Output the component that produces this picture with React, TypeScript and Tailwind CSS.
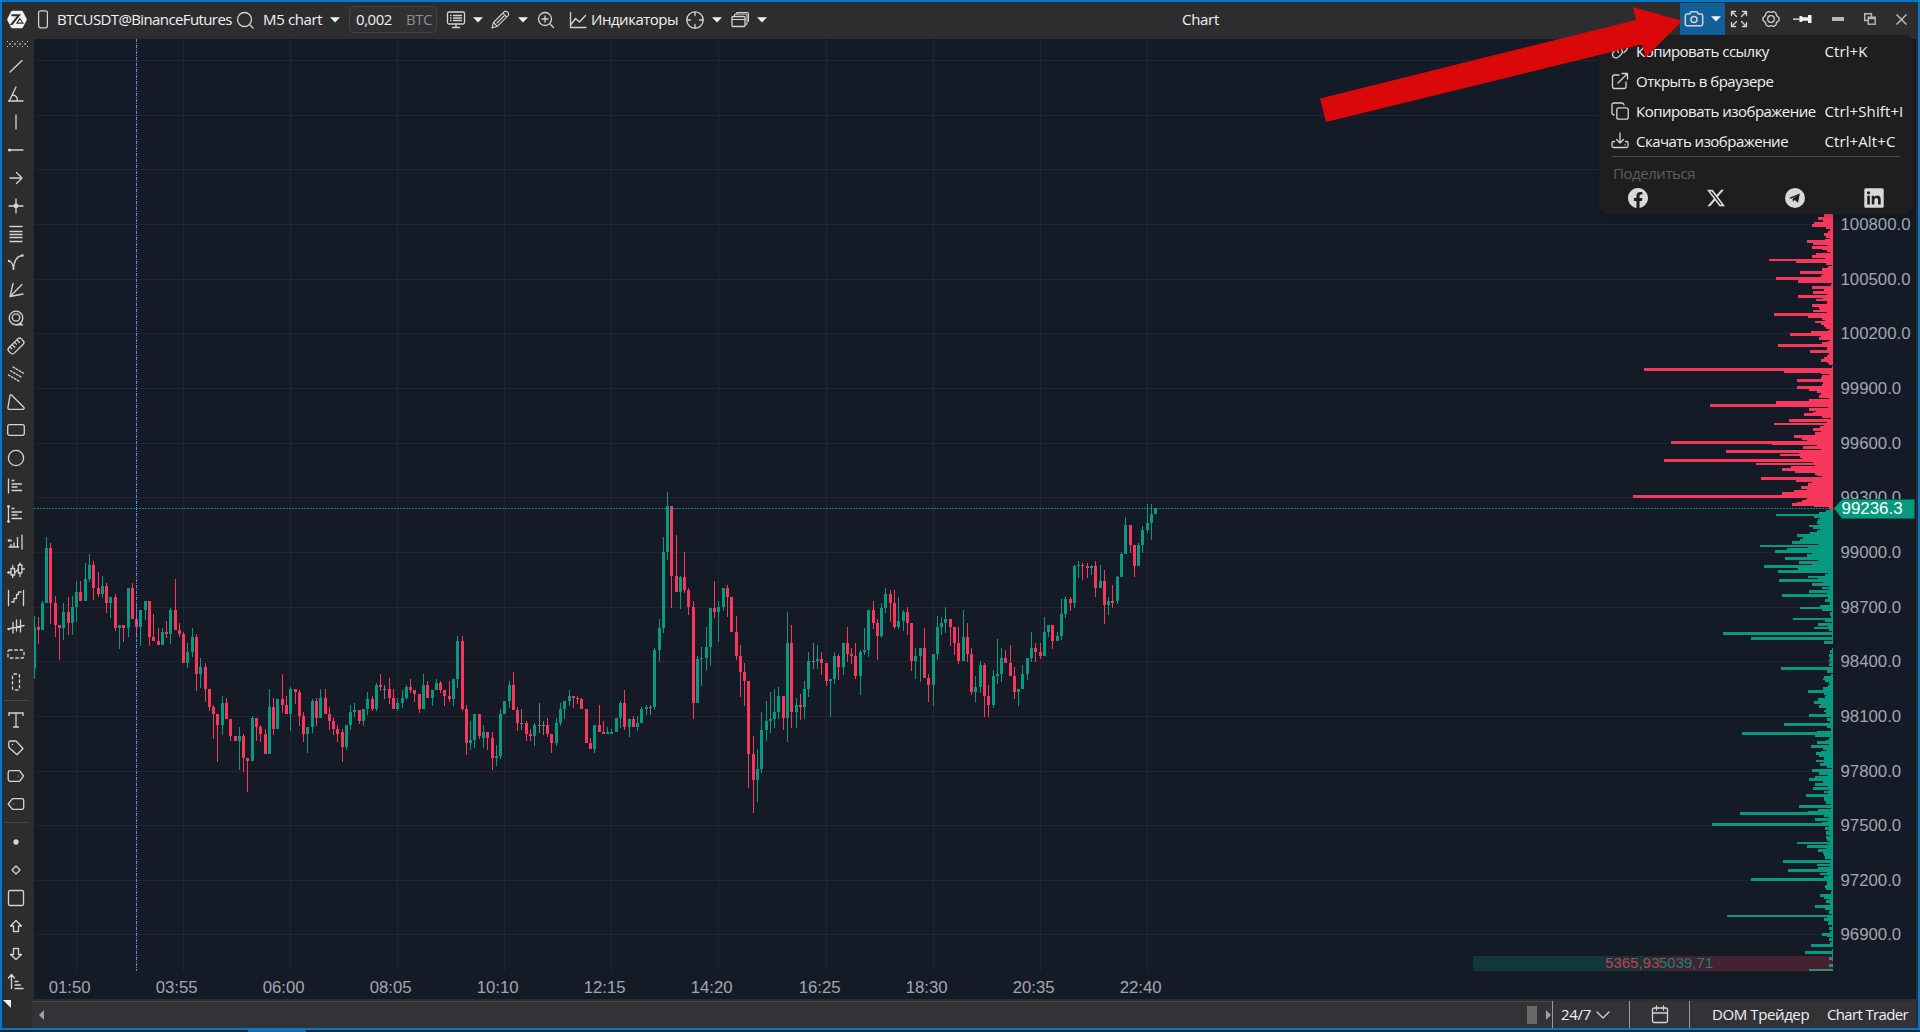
import type { ReactNode } from "react";

const GREEN = "#089981";
const RED = "#f7385c";

/* Candles: x, high, body top, body bottom, low, kind (g up, r down, w flat).
   Values are thirds of a pixel from the block's origin. */
const BLOCKS: { ox: number; rows: string }[] = [
  {
    ox: 30,
    rows: `13 408 441 564 597 g;25 411 441 450 492 r;37 363 369 450 450 g;49 171 204 369 369 g;61 189 204 369 432 r;76 348 369 435 471 r;88 435 435 444 540 r;100 369 396 444 480 g;115 351 396 429 465 r;127 348 381 429 465 g;139 303 336 381 426 g;151 303 336 363 363 r;166 249 297 363 363 g;178 222 255 297 306 g;190 243 255 324 360 r;205 276 324 342 351 r;217 288 318 342 354 g;229 309 318 369 399 r;241 351 351 369 414 g;256 342 351 444 453 r;268 435 435 444 507 g;280 435 435 444 486 r;295 324 324 444 471 g;307 309 324 417 417 r;319 369 417 441 471 r;331 390 390 441 498 g;346 363 363 390 420 g;358 363 363 471 498 r;370 402 471 483 483 r;385 444 483 495 495 r;397 444 456 495 495 g;409 423 456 462 474 r;421 384 390 462 492 g;436 297 390 450 450 r;448 429 450 462 471 r;460 456 462 549 549 r;472 489 516 549 564 g;487 444 471 516 531 g;499 462 471 582 633 r;511 534 561 582 624 g;526 549 561 627 666 r;538 627 627 681 693 r;550 675 681 702 777 r;562 702 702 735 846 r;577 648 669 735 765 g;589 654 669 717 717 r;601 717 717 768 783 r;616 768 768 783 783 r;628 741 768 783 870 g;640 762 768 834 876 r;652 834 834 843 936 r;667 708 714 843 843 g;679 714 714 741 783 r;691 735 741 762 786 r;706 747 762 822 822 r;718 627 681 822 822 g;730 654 681 747 765 r;742 657 657 747 747 g;757 582 657 675 699 r;769 648 675 702 702 r;781 621 627 702 753 g;796 627 627 636 672 r;808 630 636 708 738 r;820 696 708 762 786 r;832 741 741 762 819 g;847 657 663 741 759 g;859 654 663 714 738 r;871 627 654 714 714 g;886 627 654 702 702 r;898 681 702 723 750 r;910 714 723 747 765 r;922 735 747 762 786 r;937 747 756 801 846 r;949 735 735 801 810 g;961 675 696 735 750 g;973 669 690 696 711 g;988 690 690 723 732 r;1000 687 687 723 738 g;1012 636 657 687 705 g;1027 648 657 687 693 r;1039 609 615 687 693 g;1051 582 615 621 633 r;1063 615 627 630 657 w;1078 594 627 654 672 r;1090 627 654 687 687 r;1102 654 669 687 693 g;1117 630 654 669 684 g;1129 615 621 654 660 g;1141 597 621 630 639 r;1153 630 630 642 666 r;1168 642 642 687 699 r;1180 582 615 687 687 g`,
  },
  {
    ox: 420,
    rows: `22 603 615 654 654 r;37 630 630 654 678 g;49 597 609 630 630 g;61 603 609 630 639 r;73 630 630 648 678 r;88 603 648 657 666 r;100 597 597 657 678 g;112 468 483 597 624 g;127 468 483 687 693 r;139 675 687 789 825 r;151 723 780 789 810 g;163 702 702 780 804 g;178 702 702 768 777 r;190 735 756 774 804 g;202 756 756 774 810 r;217 756 774 834 870 r;229 795 828 834 858 g;241 687 702 828 837 g;253 663 663 702 702 g;268 603 615 663 684 g;280 576 615 690 690 r;292 681 690 729 753 r;304 687 729 732 750 w;319 723 729 762 783 r;331 747 762 768 783 r;343 729 735 768 798 g;358 669 735 738 759 w;370 723 735 738 765 w;382 714 735 762 771 r;394 762 762 789 819 r;409 714 729 789 798 g;421 669 687 729 738 g;433 663 663 687 717 g;448 630 648 663 678 g;460 648 648 654 684 r;472 648 654 657 672 r;484 654 657 687 687 r;499 687 687 789 789 r;511 774 789 807 807 r;523 735 735 807 819 g;538 675 735 756 756 r;550 723 756 762 762 r;562 741 756 762 762 g;574 747 756 762 762 g;589 714 714 756 756 g;601 663 669 714 744 g;613 630 669 741 750 r;628 717 717 741 771 g;640 708 717 741 741 r;652 708 729 741 753 g;664 681 687 729 729 g;679 675 681 687 705 g;691 675 681 684 705 w;703 504 510 681 690 g;718 417 444 510 546 g;730 171 216 444 459 g;742 36 78 216 240 g;754 78 78 288 384 r;769 165 288 336 336 r;781 288 291 336 387 g;793 216 291 330 339 r;805 324 330 381 405 r;820 363 381 669 717 r;832 528 537 669 669 g;844 501 534 537 618 g;859 441 501 534 573 g;871 384 384 501 558 g;883 303 384 396 414 r;895 363 381 396 486 g;910 324 324 381 393 g;922 315 324 351 411 r;934 351 351 456 456 r;949 408 456 528 540 r;961 495 528 576 651 r;973 549 576 603 678 r;985 603 603 822 924 r;1000 768 822 900 999 r;1012 807 867 900 966 g;1024 696 750 867 879 g;1039 663 723 750 783 g;1051 636 717 723 759 g;1063 627 696 717 744 g;1075 621 648 696 717 g;1090 648 648 714 750 r;1102 396 489 714 786 g;1114 435 489 696 744 r;1129 654 675 696 744 g;1141 642 675 681 720 r`,
  },
  {
    ox: 800,
    rows: `13 603 627 681 717 g;25 516 543 627 651 g;40 489 543 546 567 w;52 495 537 543 567 g;64 516 537 549 585 r;79 549 549 603 618 r;91 597 597 603 711 g;103 516 528 597 612 g;115 522 528 561 600 r;130 489 489 561 585 g;142 441 489 522 546 r;154 504 522 528 552 r;166 489 528 588 597 r;181 510 516 588 645 g;193 444 510 516 525 g;205 390 390 510 531 g;220 363 390 429 447 r;232 417 429 468 540 r;244 369 384 468 474 g;256 324 342 384 399 g;271 330 342 369 426 r;283 330 369 441 447 r;295 351 423 441 447 g;310 390 396 423 453 g;322 381 396 429 465 r;334 429 429 543 573 r;346 504 528 543 597 g;361 504 504 528 606 g;373 444 504 594 594 r;385 582 594 615 666 r;400 522 522 615 678 g;412 408 441 522 540 g;424 411 429 441 465 g;436 381 417 429 459 g;451 417 417 441 498 r;463 441 441 489 525 r;475 441 489 543 552 r;490 390 471 543 543 g;502 429 471 522 546 r;514 504 522 636 645 r;526 588 621 636 666 g;541 543 555 621 639 g;553 549 555 648 711 r;565 615 648 675 711 r;580 570 588 675 684 g;592 477 582 588 612 g;604 504 534 582 606 g;616 510 534 549 549 r;631 495 549 588 588 r;643 561 588 636 657 r;655 627 627 636 678 g;667 555 582 627 627 g;682 534 534 582 600 g;694 456 504 534 546 g;706 489 504 516 546 r;721 489 516 528 537 r;733 411 456 528 528 g;745 435 435 456 471 g;757 435 435 483 507 r;772 456 468 483 483 g;784 357 402 468 480 g;796 348 357 402 414 g;811 351 357 369 393 r;823 255 258 369 384 g;835 243 255 258 294 g;847 249 255 258 300 r;862 249 258 264 294 r;874 255 258 264 285 g;886 243 258 324 351 r;901 255 303 324 324 g;913 270 303 375 432 r;925 351 363 375 405 g;937 315 363 369 384 r;952 288 291 363 372 g;964 216 222 291 291 g;976 111 135 222 222 g;991 135 135 195 219 r;1003 195 195 258 291 r;1015 189 195 258 258 g;1027 138 150 195 219 g;1042 72 129 150 159 g;1054 72 102 129 180 g;1066 84 84 102 102 g`,
  },
];

/* Order-book depth outline: "y:left" steps, thirds of a pixel. */
const ASKS =
  "42:792 51:774 60:789 66:762 72:756 81:798 87:810 93:804 99:792 108:798 114:810 117:795 120:741 129:759 135:801 138:756 147:786 150:801 156:810 159:768 165:756 174:795 177:627 183:708 189:798 195:816 198:804 204:786 213:720 222:789 225:783 231:648 240:714 249:816 252:813 258:756 267:792 273:759 282:801 285:714 294:789 297:768 303:801 312:756 321:777 327:780 330:759 336:801 339:642 348:744 354:786 360:795 363:765 369:783 375:792 381:798 387:810 390:804 393:753 399:690 408:783 411:777 420:810 423:804 426:786 432:654 441:801 450:750 459:807 465:801 471:792 477:783 486:801 489:807 495:819 498:816 504:252 513:672 519:783 522:807 525:786 531:783 537:711 546:789 552:786 558:711 567:747 573:771 579:783 585:777 594:807 597:747 603:648 612:450 621:804 624:747 633:768 636:759 639:732 648:786 654:813 657:687 666:801 669:642 675:792 678:780 684:759 693:783 696:765 705:702 714:726 720:741 723:333 732:636 735:771 738:729 747:783 750:498 759:717 762:660 768:720 774:726 777:312 786:759 789:588 795:765 798:693 804:666 813:705 819:765 825:771 828:786 831:603 840:708 846:756 849:744 858:723 867:741 870:702 876:666 885:219 894:741 897:738 900:726 906:711 909:696 918:762 921:807 927:810 930:819";
const BIDS_UPPER =
  "930:798 936:777 942:648 948:762 954:780 957:774 963:771 972:777 975:747 981:759 987:780 990:771 996:750 1002:711 1011:729 1017:720 1023:696 1032:774 1035:600 1041:744 1044:681 1050:645 1059:756 1062:741 1071:675 1080:774 1083:717 1092:756 1095:612 1104:714 1110:654 1119:804 1122:795 1128:744 1134:774 1137:657 1146:789 1149:756 1158:810 1161:786 1167:807 1170:747 1179:801 1182:666 1191:819";
const BIDS_LOWER =
  "21:804 27:795 36:810 45:780 51:720 57:786 63:816 66:810 78:813 84:699 90:795 96:816 99:774 108:804 111:762 117:807 123:816 126:489 135:816 141:573 150:816 153:792 162:819 174:816 180:810 189:816 192:807 201:810 207:807 216:813 219:807 228:816 231:663 240:801 249:819 252:813 258:792 264:789 270:795 276:807 282:810 285:804 291:789 300:744 309:792 315:798 318:795 324:774 333:762 342:783 345:777 354:798 360:792 366:798 372:747 381:813 384:801 393:810 399:672 408:801 414:813 423:771 426:546 435:765 441:810 444:807 450:798 453:771 462:807 465:753 474:789 480:801 483:783 486:768 495:777 501:792 510:768 516:792 519:780 528:801 534:816 537:756 546:777 555:804 558:765 564:747 573:789 579:765 588:804 591:759 600:807 603:792 609:804 612:738 621:792 633:798 642:813 645:717 654:813 657:774 663:744 666:540 675:792 681:807 684:765 693:804 696:786 699:456 708:807 711:795 720:807 723:798 735:810 738:798 747:801 753:810 756:711 762:804 765:741 774:798 777:774 786:789 792:792 798:795 807:813 810:669 819:810 822:771 828:810 831:774 837:684 846:801 849:780 855:804 858:792 864:573 873:801 885:795 894:798 900:816 903:813 912:780 921:792 927:807 930:798 939:810 945:765 954:795 960:810 963:807 972:816 975:501 981:801 984:792 993:807 996:804 1005:816 1011:807 1020:816 1023:810 1029:786 1038:801 1041:816 1044:807 1053:816 1056:810 1062:753 1071:819 1077:816 1083:735 1092:816 1101:807 1110:816 1113:819 1122:807 1131:819 1137:747 1143:819";

function depthPath(steps: string, oy: number) {
  const pts = steps.split(" ").map((s) => s.split(":").map(Number));
  let d = "";
  for (let i = 0; i < pts.length - 1; i++) {
    const y0 = oy + pts[i][0] / 3;
    const y1 = oy + pts[i + 1][0] / 3;
    const x = 1560 + pts[i][1] / 3;
    if (x < 1833) d += `M${x} ${y0}H1833V${y1}H${x}Z`;
  }
  return d;
}

const H_LINES = [60, 115, 169, 224, 279, 333, 388, 443, 497, 552, 607, 661, 716, 771, 825, 880, 934];
const V_LINES = [76, 183, 290, 397, 504, 611, 718, 826, 933, 1040, 1147];
const TIMES = ["01:50", "03:55", "06:00", "08:05", "10:10", "12:15", "14:20", "16:25", "18:30", "20:35", "22:40"];
const PRICES = ["100800.0", "100500.0", "100200.0", "99900.0", "99600.0", "99300.0", "99000.0", "98700.0", "98400.0", "98100.0", "97800.0", "97500.0", "97200.0", "96900.0"];

function Candles() {
  return (
    <g>
      {BLOCKS.flatMap(({ ox, rows }) =>
        rows.split(";").map((row) => {
          const p = row.split(" ");
          const x = ox + Math.floor(+p[0] / 3);
          const [h, t, b, l] = [1, 2, 3, 4].map((k) => 480 + +p[k] / 3);
          const kind = p[5];
          const c = kind === "g" ? GREEN : kind === "r" ? RED : "#7b7b80";
          return (
            <g key={`${ox}-${p[0]}`} fill={c}>
              <rect x={x} y={h} width={1} height={l - h} />
              <rect x={x - 1} y={t} width={3} height={b - t} />
            </g>
          );
        })
      )}
    </g>
  );
}

function Chart() {
  return (
    <svg className="block h-[960px] w-[1882px] bg-[#151b26]" viewBox="34 39 1882 960" fontFamily="'Liberation Sans', Arial, sans-serif" shapeRendering="crispEdges">
      <g fill="#22252f">
        {H_LINES.map((y) => (
          <rect key={y} x={34} y={y} width={1799} height={1} />
        ))}
        {V_LINES.map((x) => (
          <rect key={x} x={x} y={39} width={1} height={932} />
        ))}
      </g>
      <Candles />
      <path d="M136.5 39V971" stroke="#5a93ee" strokeDasharray="3 1 1 1" />
      <path d="M34 508.5H1833" stroke="#0c9a83" strokeDasharray="2 1" strokeOpacity={0.85} />
      <path d={depthPath(ASKS, 200)} fill={RED} />
      <path d={depthPath(BIDS_UPPER, 200) + depthPath(BIDS_LOWER, 590)} fill={GREEN} />
      <rect x={1473} y={956} width={186} height={15} fill={GREEN} fillOpacity={0.22} />
      <rect x={1659} y={956} width={174} height={15} fill={RED} fillOpacity={0.22} />
      <g fontSize={15}>
        <text x={1605} y={967.8} fill="#d23653">5365,93</text>
        <text x={1659} y={967.8} fill="#178572">5039,71</text>
      </g>
      <g fontSize={16.8} fill="#a3a6b0">
        {PRICES.map((p, i) => (
          <text key={p} x={1840.5} y={H_LINES[i + 3] + 6}>{p}</text>
        ))}
        {TIMES.map((t, i) => (
          <text key={t} x={V_LINES[i] - 27.3} y={993}>{t}</text>
        ))}
      </g>
      <path d="M1834 508.5L1842 499.5H1914.5V518.5H1842Z" fill={GREEN} stroke="#0b5f53" shapeRendering="auto" />
      <text x={1841.5} y={514.3} fontSize={16.9} fill="#fff">99236.3</text>
    </svg>
  );
}

function Icon({ children, w = 24, h = 24, sw = 1.3 }: { children: ReactNode; w?: number; h?: number; sw?: number }) {
  return (
    <svg className="block shrink-0" width={w} height={h} viewBox={`0 0 ${w} ${h}`} fill="none" stroke="#d4d4d4" strokeWidth={sw} strokeLinecap="round" strokeLinejoin="round">
      {children}
    </svg>
  );
}

function Caret() {
  return (
    <svg className="block shrink-0" width={10} height={6} viewBox="0 0 10 6">
      <path d="M0 .3H10L5 5.6Z" fill="#f1f1f1" />
    </svg>
  );
}

const dot = { fill: "#d4d4d4", stroke: "none" };

const TOOLS_A: ReactNode[] = [
  <path d="M6 18L18 6.500" />,
  <path d="M4.500 19H19M5.500 18.500L12 5M8 13C11.500 13 13.500 15.500 13.500 19" />,
  <path d="M12 5V19" />,
  <><path d="M5 12H19" /><circle cx="5.500" cy="12" r="1.500" {...dot} /></>,
  <path d="M6 12H18M12.500 6.500L18 12L12.500 17.500" />,
  <><path d="M12 5V19M5 12H19" /><circle cx="12" cy="12" r="2.400" {...dot} /></>,
  <path d="M5.500 4.500H18.500M5.500 9.500H18.500M5.500 12.500H18.500M5.500 15.500H18.500M5.500 19.500H18.500" strokeLinecap="butt" />,
  <><path d="M5.500 11C8 12 9 14.500 9.500 19C10 11 13 6 18.500 5.500" /><circle cx="5" cy="11" r="1.200" {...dot} /><circle cx="18.500" cy="5.500" r="1.200" {...dot} /><circle cx="9.500" cy="19" r="1" {...dot} /></>,
  <path d="M9 5.500L6 18.500L18 6.500M6 18.500L19 16" />,
  <><circle cx="12" cy="12" r="6.800" /><circle cx="12" cy="11.500" r="3.700" /><path d="M12 18.800H18.700M16 17.300L18 18.800" /></>,
  <g transform="rotate(-45 12 12)"><rect x="3.200" y="8.200" width="17.600" height="7.600" rx="2.500" /><path d="M7 8.500V11M10.300 8.500V12M13.600 8.500V11M16.900 8.500V12" /></g>,
  <g strokeDasharray="1.800 1.600"><path d="M4.500 13L15.500 19.500M6.500 8.800L18 15.500M9 5L20 11.500" /></g>,
  <path d="M8 5.500L20 17.500C20.500 18.500 20 19.300 19 19.300H5.200C4.300 19.300 3.800 18.700 3.900 17.900L6 5.500C6.200 4.200 7.200 4.300 8 5.500Z" />,
  <rect x="3.700" y="6.700" width="16.600" height="10.600" rx="2" />,
  <circle cx="12" cy="12" r="7.600" />,
  <path d="M4.500 4.500V19.500M7.500 6.500H10.500M7.500 10H18M7.500 13H13.500M7.500 16.500H18" strokeLinecap="butt" />,
  <><path d="M4.500 4.500V19.500M7.500 6.500H10.500M7.500 10H18M7.500 13H13.500M7.500 16.500H18" strokeLinecap="butt" /><circle cx="4.500" cy="4.500" r="1.400" {...dot} /><circle cx="4.500" cy="19.500" r="1.400" {...dot} /></>,
  <><path d="M18 4.500V19.500M13.500 17V7M10 17V12.500M5 10.500H8M7 17V14M4.500 17H15" strokeLinecap="butt" /><circle cx="5" cy="10.500" r="1.300" {...dot} /></>,
  <><path d="M4 14.500H7M11 14.500L14.500 11M18 11H20.500M8.700 7.500V10.500M8.700 17V19.500M16 5V7M16 15V18.500" /><rect x="7" y="10.500" width="3.600" height="6.500" /><rect x="14.300" y="7" width="3.600" height="8" /><circle cx="4.500" cy="14.500" r="1.200" {...dot} /></>,
  <path d="M4.500 4.500V19.500M19.500 4.500V19.500M7.500 16H10V12.500H12.500V8.500H14.500V6H17" />,
  <><path d="M4.500 15L20 11.500M9 8.500V19M12.500 6V17M16.500 6V18" /><circle cx="4.500" cy="15" r="1.200" {...dot} /></>,
  <rect x="4" y="8" width="16" height="8" rx="1.500" strokeDasharray="2.500 2.800" />,
  <rect x="8.500" y="4" width="7" height="16" rx="1.500" strokeDasharray="2.500 2.800" />,
];

const TOOLS_B: ReactNode[] = [
  <path d="M5 7.500V5H19V7.500M12 5V19M9.500 19H14.500" strokeLinejoin="miter" />,
  <><path d="M4.800 6.800Q4.800 5 6.600 5H12L19 12.500L13 18.700L5.500 12Q4.800 11.500 4.800 10.500Z" /><circle cx="8.500" cy="8.500" r=".7" {...dot} /></>,
  <><path d="M6 6.700H15.500L19.500 12L15.500 17.300H6Q4.200 17.300 4.200 15.500V8.500Q4.200 6.700 6 6.700Z" /><circle cx="14.500" cy="12" r=".6" {...dot} /></>,
  <><path d="M18 6.700H8.500L4.200 12L8.500 17.300H18Q19.700 17.300 19.700 15.500V8.500Q19.700 6.700 18 6.700Z" /><circle cx="9.300" cy="12" r=".6" {...dot} /></>,
];

const TOOLS_C: ReactNode[] = [
  <circle cx="12" cy="12" r="2.700" {...dot} />,
  <path d="M12 8L16 12L12 16L8 12Z" />,
  <rect x="4.500" y="4.500" width="15" height="15" rx="1.500" />,
  <path d="M12 6.500L17.500 12H14.500V17.500H9.500V12H6.500Z" />,
  <path d="M12 17.500L17.500 12.500H14.500V6.500H9.500V12.500H6.500Z" />,
  <path d="M7.500 18.500V5M4.500 8L7.500 4.500L10.500 8M11 11.500H14M11 15H16.500M11 18.500H19" />,
];

function Tool({ children }: { children: ReactNode }) {
  return <div className="flex h-7 w-7 shrink-0 items-center justify-center">{children}</div>;
}

function Divider() {
  return (
    <div className="h-[10px] shrink-0 pl-0.5 pr-[5px] pt-1">
      <div className="h-px w-full bg-[#47474b]" />
    </div>
  );
}

function Sidebar() {
  return (
    <aside className="flex w-8 shrink-0 flex-col bg-[#2d2d30]">
      <svg className="ml-[5px] block h-[13px] w-[22px] shrink-0" viewBox="0 0 22 13">
        {[0, 1, 2, 3, 4].map((i) => (
          <g key={i} fill="#c9c9c9">
            <rect x={i * 5} y={2} width={1} height={1} />
            <rect x={i * 5} y={7} width={1} height={1} />
            {i < 4 && <rect x={i * 5 + 2} y={4} width={2} height={2} fill="#8a8a8a" />}
          </g>
        ))}
      </svg>
      {TOOLS_A.map((t, i) => (
        <Tool key={i}><Icon>{t}</Icon></Tool>
      ))}
      <Divider />
      {TOOLS_B.map((t, i) => (
        <Tool key={i}><Icon>{t}</Icon></Tool>
      ))}
      <Divider />
      {TOOLS_C.map((t, i) => (
        <Tool key={i}><Icon>{t}</Icon></Tool>
      ))}
      <svg className="ml-px mt-1 block h-2 w-2 shrink-0" viewBox="0 0 8 8"><path d="M0 0H8V8Z" fill="#f1f1f1" /></svg>
    </aside>
  );
}

function Header() {
  return (
    <header className="flex h-[37px] shrink-0 items-start bg-[#2d2d30] pl-[5px] text-[#f1f1f1]">
      <div className="flex h-[35px] items-center">
        <svg className="block" width={20} height={19} viewBox="0 0 20 19">
          <path d="M5.500 .8H14.500Q15.500 .8 16 1.700L19.500 8.500Q20 9.500 19.500 10.500L16 17.300Q15.500 18.200 14.500 18.200H5.500Q4.500 18.200 4 17.300L.5 10.500Q0 9.500 .5 8.500L4 1.700Q4.500 .8 5.500 .8Z" fill="#f1f1f1" />
          <path d="M4.500 4.200H14L5.500 15H2.800L9.800 6.300H4.500Z" fill="#2d2d30" />
          <path d="M12.800 7.700L17 13.700H8.800Z" fill="#2d2d30" />
          <path d="M13 9.700L15 12.500H11Z" fill="#f1f1f1" />
        </svg>
        <svg className="ml-[11px] block" width={10} height={19} viewBox="0 0 10 19"><rect x=".6" y=".8" width="8.800" height="17" rx="2" fill="none" stroke="#d4d4d4" strokeWidth="1.200" /></svg>
        <span className="ml-[9px] w-[179px] whitespace-nowrap text-[15px] tracking-[-0.61px]">BTCUSDT@BinanceFutures</span>
        <Icon w={18} h={18}><circle cx="8.500" cy="8.500" r="7" /><path d="M13.500 13.500L17 17" /></Icon>
        <span className="ml-[9px] w-[67px] whitespace-nowrap text-[15px] tracking-[-0.35px]">M5 chart</span>
        <Caret />
        <div className="ml-[9px] flex h-[27px] w-[88px] items-center rounded-[5px] border border-[#434346] bg-[#303033] pl-1.5 text-[15px] tracking-[-0.45px]">
          <span className="w-[50px] pb-px">0,002</span>
          <span className="pb-px text-[#8e8e90]">BTC</span>
        </div>
        <div className="ml-[9px] flex items-center">
          <Icon w={20} h={18}><rect x="1.500" y="1" width="17" height="12" rx="1.500" /><path d="M7.500 4.500H15.500M7.500 7H15.500M7.500 9.500H15.500M4.500 4.500H5M4.500 7H5M4.500 9.500H5M10 13V16M6.500 16.500H13.500" /></Icon>
          <div className="ml-[7px]"><Caret /></div>
          <div className="ml-[8px]"><Icon w={19} h={19}><path d="M1 18L2.500 12.500L13.500 1.500Q14.500 .7 15.800 1.500L17.300 3Q18.200 4.200 17.300 5.300L6.300 16.300ZM12 3.200L15.700 7M2.500 12.500L6.300 16.300M13 6L6 13" strokeWidth="1.100" /></Icon></div>
          <div className="ml-[8px]"><Caret /></div>
          <div className="ml-[9px]"><Icon w={18} h={18}><circle cx="8" cy="8" r="6.500" /><path d="M13 13L16.500 16.500M5 8H11M8 5V11" /></Icon></div>
          <div className="ml-[14px]"><Icon w={18} h={18}><path d="M1.500 1.500V16.500H17M2 13.500L6.500 7.500L10.500 11L16.500 4.500" /></Icon></div>
          <span className="ml-[4px] w-[94px] whitespace-nowrap text-[15px] tracking-[-0.48px]">Индикаторы</span>
          <Icon w={20} h={20}><circle cx="10" cy="10" r="8.200" /><path d="M10 2V5.500M10 14.500V18M2 10H5.500M14.500 10H18" /></Icon>
          <div className="ml-[7px]"><Caret /></div>
          <div className="ml-[9px]"><Icon w={18} h={18}><rect x="1" y="5.500" width="13" height="10" rx="1" /><path d="M1 8.500H14M3.500 5V4Q3.500 3 4.500 3H15Q16 3 16 4V12.500Q16 13.500 15 13.500M5.500 2.500Q5.800 1.500 6.500 1.500H16.500Q17.500 1.500 17.500 2.500V10.500" strokeWidth="1.100" /></Icon></div>
          <div className="ml-[8px]"><Caret /></div>
        </div>
      </div>
      <span className="ml-[415px] mt-[6px] w-[40px] text-[15px] tracking-[-0.3px]">Chart</span>
      <div className="ml-auto mt-[3px] flex items-start">
        <div className="mt-[7px] flex items-center gap-1 pr-[4px]">
          <Icon w={19} h={19}><path d="M2 17L15 3" /></Icon>
          <Caret />
        </div>
        <div className="-mt-[2px] flex h-8 w-[45px] items-center bg-[#11609a] pl-[4px]">
          <Icon w={20} h={18} sw={1.500}><path d="M3 4H5.500L7 1.800H13L14.500 4H17Q18.700 4 18.700 5.700V14Q18.700 15.700 17 15.700H3Q1.300 15.700 1.300 14V5.700Q1.300 4 3 4Z" /><circle cx="10" cy="9.500" r="3" /></Icon>
          <div className="ml-[7px]"><Caret /></div>
        </div>
        <div className="mt-[5px] ml-[5px] flex items-center">
          <Icon w={18} h={18}><path d="M1.500 5.500V1.500H5.500M1.500 1.500L6.500 6.500M12.500 1.500H16.500V5.500M16.500 1.500L11.500 6.500M1.500 12.500V16.500H5.500M1.500 16.500L6.500 11.500M16.500 12.500V16.500H12.500M16.500 16.500L11.500 11.500" /></Icon>
          <div className="ml-[14px]"><Icon w={18} h={18}><path d="M6.500 1.500L8 2.200H10L11.500 1.500L14 3L14.300 5L15.500 6.500L17 7.500V10.500L15.500 11.500L14.300 13L14 15L11.500 16.500L10 15.800H8L6.500 16.500L4 15L3.700 13L2.500 11.500L1 10.500V7.500L2.500 6.500L3.700 5L4 3Z" /><circle cx="9" cy="9" r="3.300" /></Icon></div>
          <svg className="ml-[13px] block" width={20} height={12} viewBox="0 0 20 12"><path d="M0 5.500H6.500V3H8.500L10 4.200H15V2H18.500V10H15V7.800H10L8.500 9H6.500V6.700H0Z" fill="#f1f1f1" /></svg>
          <div className="ml-[19px] h-1 w-3 bg-[#b9b9ba]" />
          <svg className="ml-[20px] block" width={12} height={12} viewBox="0 0 12 12" fill="none" stroke="#b9b9ba" strokeWidth="1.400"><path d="M7.500 4V.7H.7V7.500H4" /><rect x="4.200" y="4.200" width="7" height="7" /><path d="M4 5.500H11.500" /></svg>
          <svg className="ml-[20px] mr-[11px] block" width={11} height={11} viewBox="0 0 11 11" stroke="#b9b9ba" strokeWidth="1.500"><path d="M.5 .5L10.500 10.500M10.500 .5L.5 10.500" /></svg>
        </div>
      </div>
    </header>
  );
}

function MenuRow({ icon, label, keys }: { icon: ReactNode; label: string; keys?: string }) {
  return (
    <div className="flex h-[30px] items-center">
      <Icon w={18} h={18}>{icon}</Icon>
      <span className="ml-[7px] w-[188.500px] whitespace-nowrap tracking-[-0.52px]">{label}</span>
      <span className="whitespace-nowrap tracking-[0.1px]">{keys}</span>
    </div>
  );
}

function ShareMenu() {
  return (
    <div className="absolute left-[1599px] top-[35px] h-[179px] w-[315px] rounded-[10px] bg-[#1e1e1e] pl-[12px] pt-[1px] text-[15px] text-[#f1f1f1] shadow-md">
      <MenuRow label="Копировать ссылку" keys="Ctrl+K" icon={<path d="M7.500 10.500Q5.500 8 7.700 5.800L10.500 3Q13 1 15.500 3Q17.500 5.500 15.500 8L13 10.500M10.500 7.500Q12.500 10 10.300 12.200L7.500 15Q5 17 2.500 15Q.5 12.500 2.500 10L5 7.500" />} />
      <MenuRow label="Открыть в браузере" icon={<path d="M8 3H3.500Q1.500 3 1.500 5V14.500Q1.500 16.500 3.500 16.500H13Q15 16.500 15 14.500V10M11 1.500H16.500V7M16.500 1.500L7 11" />} />
      <MenuRow label="Копировать изображение" keys="Ctrl+Shift+I" icon={<><rect x="5.800" y="5.800" width="11.400" height="11.400" rx="2" /><path d="M3 13Q1 12.500 1 11V3Q1 1 3 1H11Q12.800 1 13 3" /></>} />
      <MenuRow label="Скачать изображение" keys="Ctrl+Alt+C" icon={<path d="M9 1V10.500M5.500 7.500L9 11L12.500 7.500M3.500 9.500H2.500Q1 9.500 1 11V14Q1 15.500 2.500 15.500H15.500Q17 15.500 17 14V11Q17 9.500 15.500 9.500H14.500M14 12.800H14.200" />} />
      <div className="ml-px h-px w-72 bg-[#4a4a4d]" />
      <div className="mt-[4px] pl-0.5 leading-[24px] tracking-[-0.45px] text-[#5c5c64]">Поделиться</div>
      <div className="flex justify-between pl-[17px] pr-[30px] pt-[3px]">
        <svg width={20} height={20} viewBox="0 0 24 24" fill="#d9d9d9"><path d="M24 12.073c0-6.627-5.373-12-12-12s-12 5.373-12 12c0 5.990 4.388 10.954 10.125 11.854v-8.385H7.078v-3.470h3.047V9.430c0-3.007 1.792-4.669 4.533-4.669 1.312 0 2.686.235 2.686.235v2.953H15.830c-1.491 0-1.956.925-1.956 1.874v2.250h3.328l-.532 3.470h-2.796v8.385C19.612 23.027 24 18.062 24 12.073z" /></svg>
        <svg width={18} height={20} viewBox="0 0 24 24" fill="#d9d9d9"><path d="M18.901 1.153h3.680l-8.040 9.190L24 22.846h-7.406l-5.800-7.584-6.638 7.584H.474l8.600-9.830L0 1.154h7.594l5.243 6.932ZM17.610 20.644h2.039L6.486 3.240H4.298Z" /></svg>
        <svg width={20} height={20} viewBox="0 0 24 24"><circle cx="12" cy="12" r="12" fill="#d9d9d9" /><path d="M5 11.800L17.800 6.600L15.700 17.600L11.500 14.400L9.500 16.500L9 13.200L14.500 8.800L7.800 13Z" fill="#1e1e1e" /></svg>
        <svg width={20} height={20} viewBox="0 0 20 20"><rect x=".3" y=".3" width="19.400" height="19.400" rx="1.500" fill="#d9d9d9" /><path d="M3.200 7.700H5.900V16.600H3.200ZM7.700 7.700H10.300V9Q11.200 7.500 13.200 7.500Q16.700 7.500 16.700 11.500V16.600H14V12Q14 9.900 12.400 9.900Q10.400 9.900 10.400 12.200V16.600H7.700Z" fill="#1e1e1e" /><circle cx="4.550" cy="4.800" r="1.600" fill="#1e1e1e" /></svg>
      </div>
    </div>
  );
}

function Footer() {
  return (
    <footer className="-ml-[2px] flex h-[27px] min-w-0 items-center bg-[#333337] text-[15px] text-[#f1f1f1]">
      <div className="flex h-full w-[1520px] items-center border-t border-[#45454a]">
        <svg className="ml-[7px] block" width={5} height={10} viewBox="0 0 5 10"><path d="M5 0V10L0 5Z" fill="#a0a0a0" /></svg>
        <div className="ml-auto h-[18px] w-[10px] bg-[#686868]" />
        <svg className="ml-[9px] mr-[1px] block" width={5} height={10} viewBox="0 0 5 10"><path d="M0 0V10L5 5Z" fill="#a0a0a0" /></svg>
      </div>
      <div className="flex h-full w-[77px] items-center border-l border-[#9a9a9c] pl-2">
        <span className="w-[35px] whitespace-nowrap tracking-[-0.3px]">24/7</span>
        <Icon w={14} h={8}><path d="M1 1L7 7L13 1" /></Icon>
      </div>
      <div className="flex h-full w-[60px] items-center justify-center border-l border-[#9a9a9c]">
        <Icon w={18} h={20}><rect x="1.500" y="3" width="15" height="14.500" rx="1.500" /><path d="M1.500 8H16.500M5.500 1V5M12.500 1V5" /></Icon>
      </div>
      <div className="flex h-full flex-1 items-center border-l border-[#9a9a9c] pl-[22px]">
        <span className="w-[115px] whitespace-nowrap tracking-[-0.4px]">DOM Трейдер</span>
        <span className="whitespace-nowrap tracking-[-0.65px]">Chart Trader</span>
      </div>
    </footer>
  );
}

export default function App() {
  return (
    <div className="relative h-[1032px] w-[1920px] overflow-hidden bg-[#1b2838] font-['Open_Sans','Noto_Sans',sans-serif]">
      <div className="flex h-[1030px] flex-col border-2 border-[#007acc] bg-[#2d2d30]">
        <Header />
        <div className="flex min-h-0 flex-1">
          <Sidebar />
          <div className="flex flex-col gap-[2px]">
            <Chart />
            <Footer />
          </div>
        </div>
      </div>
      <div className="ml-[248px] h-0.5 w-[58px] bg-[#20699c]" />
      <ShareMenu />
      <svg className="absolute left-[1310px] top-0" width={380} height={130} viewBox="1310 0 380 130">
        <path d="M1320 98.500L1636 20L1633 7L1682 21L1646 57L1641.700 44.500L1326 122Z" fill="#da0808" />
      </svg>
    </div>
  );
}
